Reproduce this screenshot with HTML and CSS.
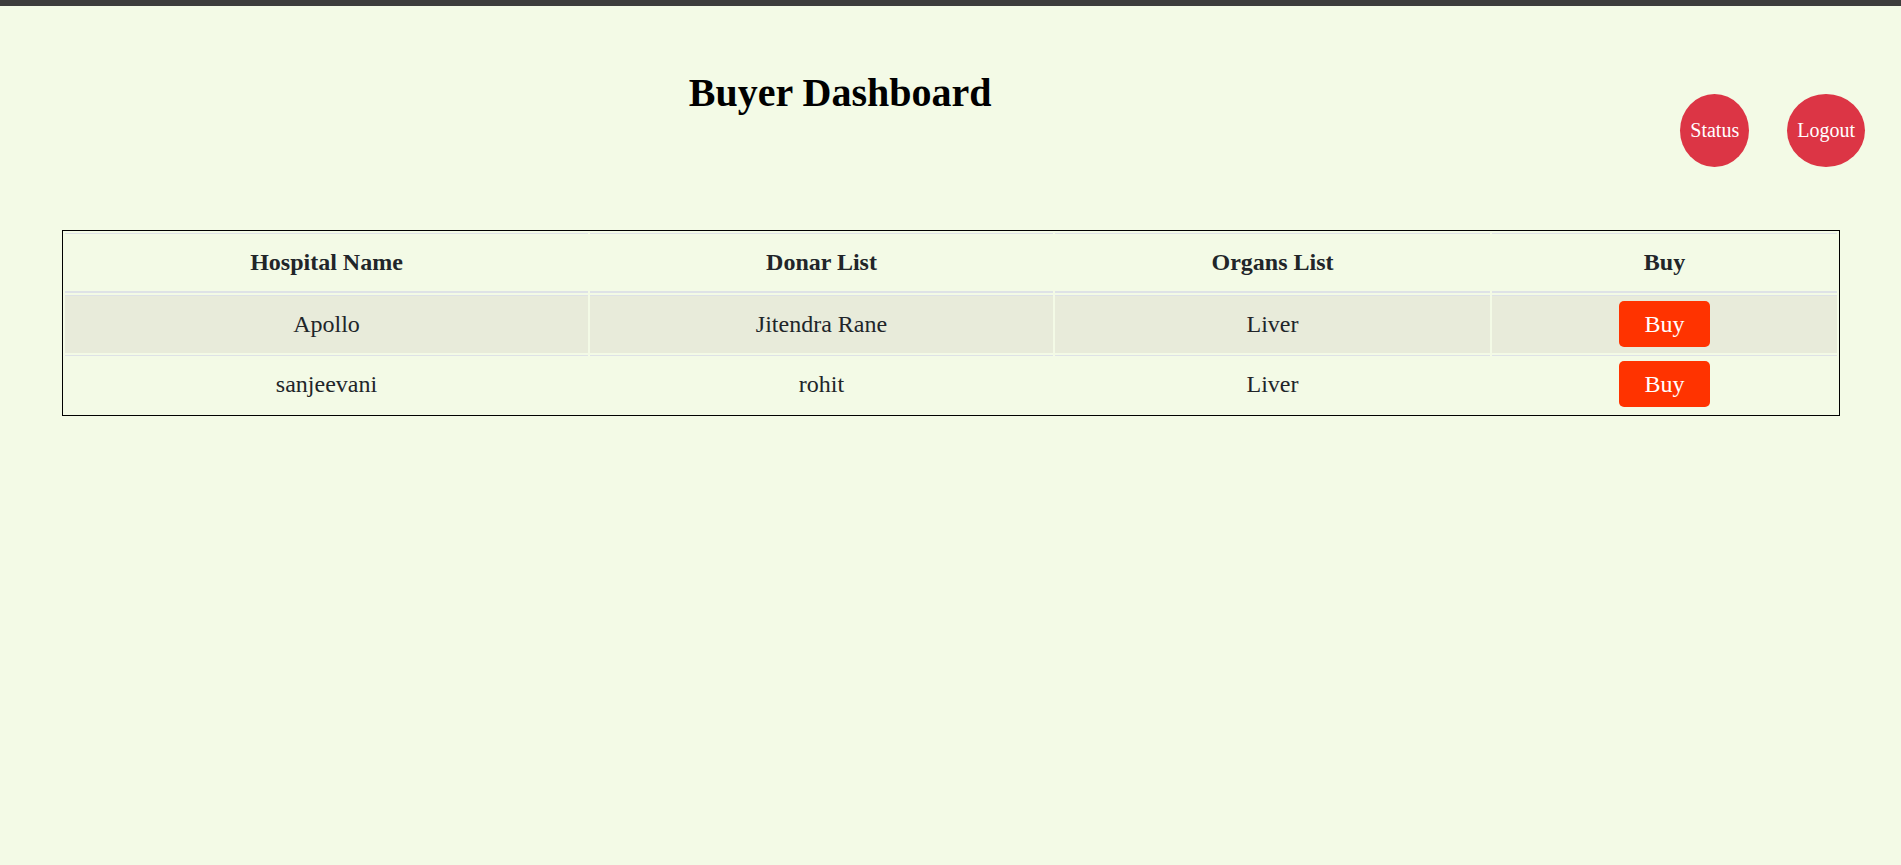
FILE: index.html
```html
<!DOCTYPE html>
<html lang="en">
<head>
<meta charset="utf-8">
<title>Buyer Dashboard</title>
<link rel="stylesheet" href="styles.css">
</head>
<body>
<div class="topbar"></div>
<header class="header">
  <h1 class="title">Buyer Dashboard</h1>
  <div class="actions">
    <button class="round-btn">Status</button>
    <button class="round-btn">Logout</button>
  </div>
</header>
<main class="content">
  <table class="grid">
    <colgroup>
      <col class="c-hospital">
      <col class="c-donar">
      <col class="c-organ">
      <col class="c-buy">
    </colgroup>
    <thead>
      <tr>
        <th>Hospital Name</th>
        <th>Donar List</th>
        <th>Organs List</th>
        <th>Buy</th>
      </tr>
    </thead>
    <tbody>
      <tr class="striped">
        <td>Apollo</td>
        <td>Jitendra Rane</td>
        <td>Liver</td>
        <td><button class="buy-btn">Buy</button></td>
      </tr>
      <tr>
        <td>sanjeevani</td>
        <td>rohit</td>
        <td>Liver</td>
        <td><button class="buy-btn">Buy</button></td>
      </tr>
    </tbody>
  </table>
</main>
</body>
</html>
```

FILE: styles.css
```css
html, body {
  margin: 0;
  padding: 0;
}
body {
  background: #f3fae6;
  font-family: "Liberation Serif", "Times New Roman", serif;
  color: #212529;
  min-height: 865px;
}
.topbar {
  height: 6px;
  background: #3c3c3c;
}
.header {
  display: flex;
  align-items: flex-start;
}
.title {
  flex: 1;
  margin: 63px 0 0;
  text-align: center;
  font-size: 40px;
  line-height: 48px;
  font-weight: bold;
  color: #000;
}
.actions {
  display: flex;
  gap: 38px;
  margin-top: 88px;
  padding-right: 36px;
}
.round-btn {
  font-family: "Liberation Serif", "Times New Roman", serif;
  font-size: 20px;
  line-height: 73px;
  height: 73px;
  padding: 0 10px;
  border: 0;
  border-radius: 50%;
  background: #dc3545;
  color: #fff;
}
.content {
  padding: 63px 61px 0 62px;
}
.grid {
  width: 100%;
  table-layout: fixed;
  border: 1px solid #000;
  border-collapse: separate;
  border-spacing: 2px;
  font-size: 24px;
}
.c-hospital { width: 523px; }
.c-donar { width: 463px; }
.c-organ { width: 435px; }
.c-buy { width: 345px; }
.grid th {
  padding: 10px 0 11px;
  line-height: 36px;
  font-weight: bold;
  text-align: center;
  border-top: 1px solid #dee2e6;
  border-bottom: 2px solid #dee2e6;
}
.grid td {
  padding: 5px 0 6px;
  line-height: 46px;
  height: 46px;
  text-align: center;
  vertical-align: middle;
  border-top: 1px solid #dee2e6;
}
.striped td {
  background: #e8ebda;
}
.buy-btn {
  display: block;
  margin: 0 auto;
  font-family: "Liberation Serif", "Times New Roman", serif;
  font-size: 24px;
  line-height: 36px;
  height: 46px;
  padding: 5px 25px;
  border: 0;
  border-radius: 5px;
  background: #ff3300;
  color: #fff;
}
```
